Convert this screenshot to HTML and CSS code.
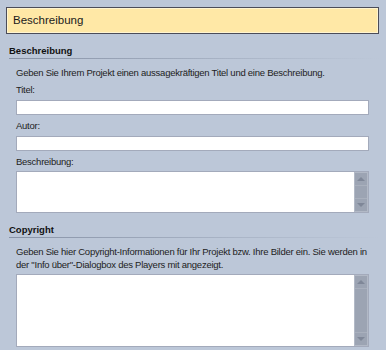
FILE: index.html
```html
<!DOCTYPE html>
<html lang="de">
  <head>
    <meta charset="UTF-8" />
    <title>Beschreibung</title>
    <link rel="stylesheet" href="styles.css">
  </head>
  <body>
    <div class="page-title">Beschreibung</div>

    <div class="section">
      <h2 class="section-head">Beschreibung</h2>
      <p class="hint">Geben Sie Ihrem Projekt einen aussagekräftigen Titel und eine Beschreibung.</p>

      <label class="field-label" for="inputTitle">Titel:</label>
      <input id="inputTitle" class="field" type="text" />

      <label class="field-label" for="inputAuthor">Autor:</label>
      <input id="inputAuthor" class="field" type="text" />

      <label class="field-label" for="inputDesc">Beschreibung:</label>
      <div class="memo memo-desc">
        <div class="memo-text" id="inputDesc"></div>
        <div class="scroll">
          <span class="scroll-btn"><span class="arrow arrow-up"></span></span>
          <span class="scroll-btn"><span class="arrow arrow-down"></span></span>
        </div>
      </div>
    </div>

    <div class="section">
      <h2 class="section-head">Copyright</h2>
      <p class="hint">Geben Sie hier Copyright-Informationen für Ihr Projekt bzw. Ihre Bilder ein. Sie werden in der "Info über"-Dialogbox des Players mit angezeigt.</p>
      <div class="memo memo-copy">
        <div class="memo-text"></div>
        <div class="scroll">
          <span class="scroll-btn"><span class="arrow arrow-up"></span></span>
          <span class="scroll-btn"><span class="arrow arrow-down"></span></span>
        </div>
      </div>
    </div>
  </body>
</html>
```

FILE: styles.css
```css
body {
  font-family: "Liberation Sans", Arial, sans-serif;
  font-size: 9.5px;
  letter-spacing: -0.25px;
  color: #1e1e1e;
  background-color: #bcc7d8;
  margin: 0;
  padding: 7px 7px 0 6px;
  overflow: hidden;
}
.page-title {
  height: 25px;
  line-height: 25px;
  padding-left: 6px;
  font-size: 11.5px;
  letter-spacing: 0;
  color: #1a1a1a;
  background-color: #ffe8a6;
  border: 1px solid #4b4c58;
  box-shadow: inset 0 0 0 1px #fff4cf;
}
.section {
  padding-left: 3px;
}
.section-head {
  font-size: 9.5px;
  font-weight: bold;
  letter-spacing: 0;
  line-height: 12px;
  color: #111;
  margin: 11px 0 0 0;
  padding: 0 0 1px 0;
  border-bottom: 1px solid transparent;
  border-image: linear-gradient(to right, #8792a6, #a9b4c6 60%, #bcc7d8) 1;
}
.hint {
  margin: 7px 8px 0 7px;
  line-height: 13px;
  color: #222;
}
.field-label {
  display: block;
  margin: 4px 0 0 7px;
  line-height: 13px;
  color: #222;
}
.field {
  display: block;
  box-sizing: border-box;
  width: calc(100% - 17px);
  height: 15px;
  margin: 4px 0 0 7px;
  padding: 0 2px;
  border: 1px solid #a3aabb;
  background: #ffffff;
  font: inherit;
}
.memo {
  display: flex;
  box-sizing: border-box;
  width: calc(100% - 17px);
  margin: 3px 0 0 7px;
  border: 1px solid #a3aabb;
  background: #ffffff;
}
.memo-desc {
  height: 42px;
}
.memo-copy {
  height: 73px;
  margin-top: 3px;
}
.memo-text {
  flex: 1;
}
.scroll {
  width: 14px;
  display: flex;
  flex-direction: column;
  justify-content: space-between;
  background: #9ca4b3;
  border: 1px solid #b2b9c6;
  box-sizing: border-box;
}
.scroll-btn {
  height: 12px;
  display: flex;
  align-items: center;
  justify-content: center;
  border-bottom: 1px solid #a9b0bd;
}
.scroll-btn + .scroll-btn {
  border-bottom: none;
  border-top: 1px solid #a9b0bd;
}
.arrow {
  width: 0;
  height: 0;
  border-left: 4px solid transparent;
  border-right: 4px solid transparent;
}
.arrow-up {
  border-bottom: 4px solid #7f8798;
}
.arrow-down {
  border-top: 4px solid #7f8798;
}
```
